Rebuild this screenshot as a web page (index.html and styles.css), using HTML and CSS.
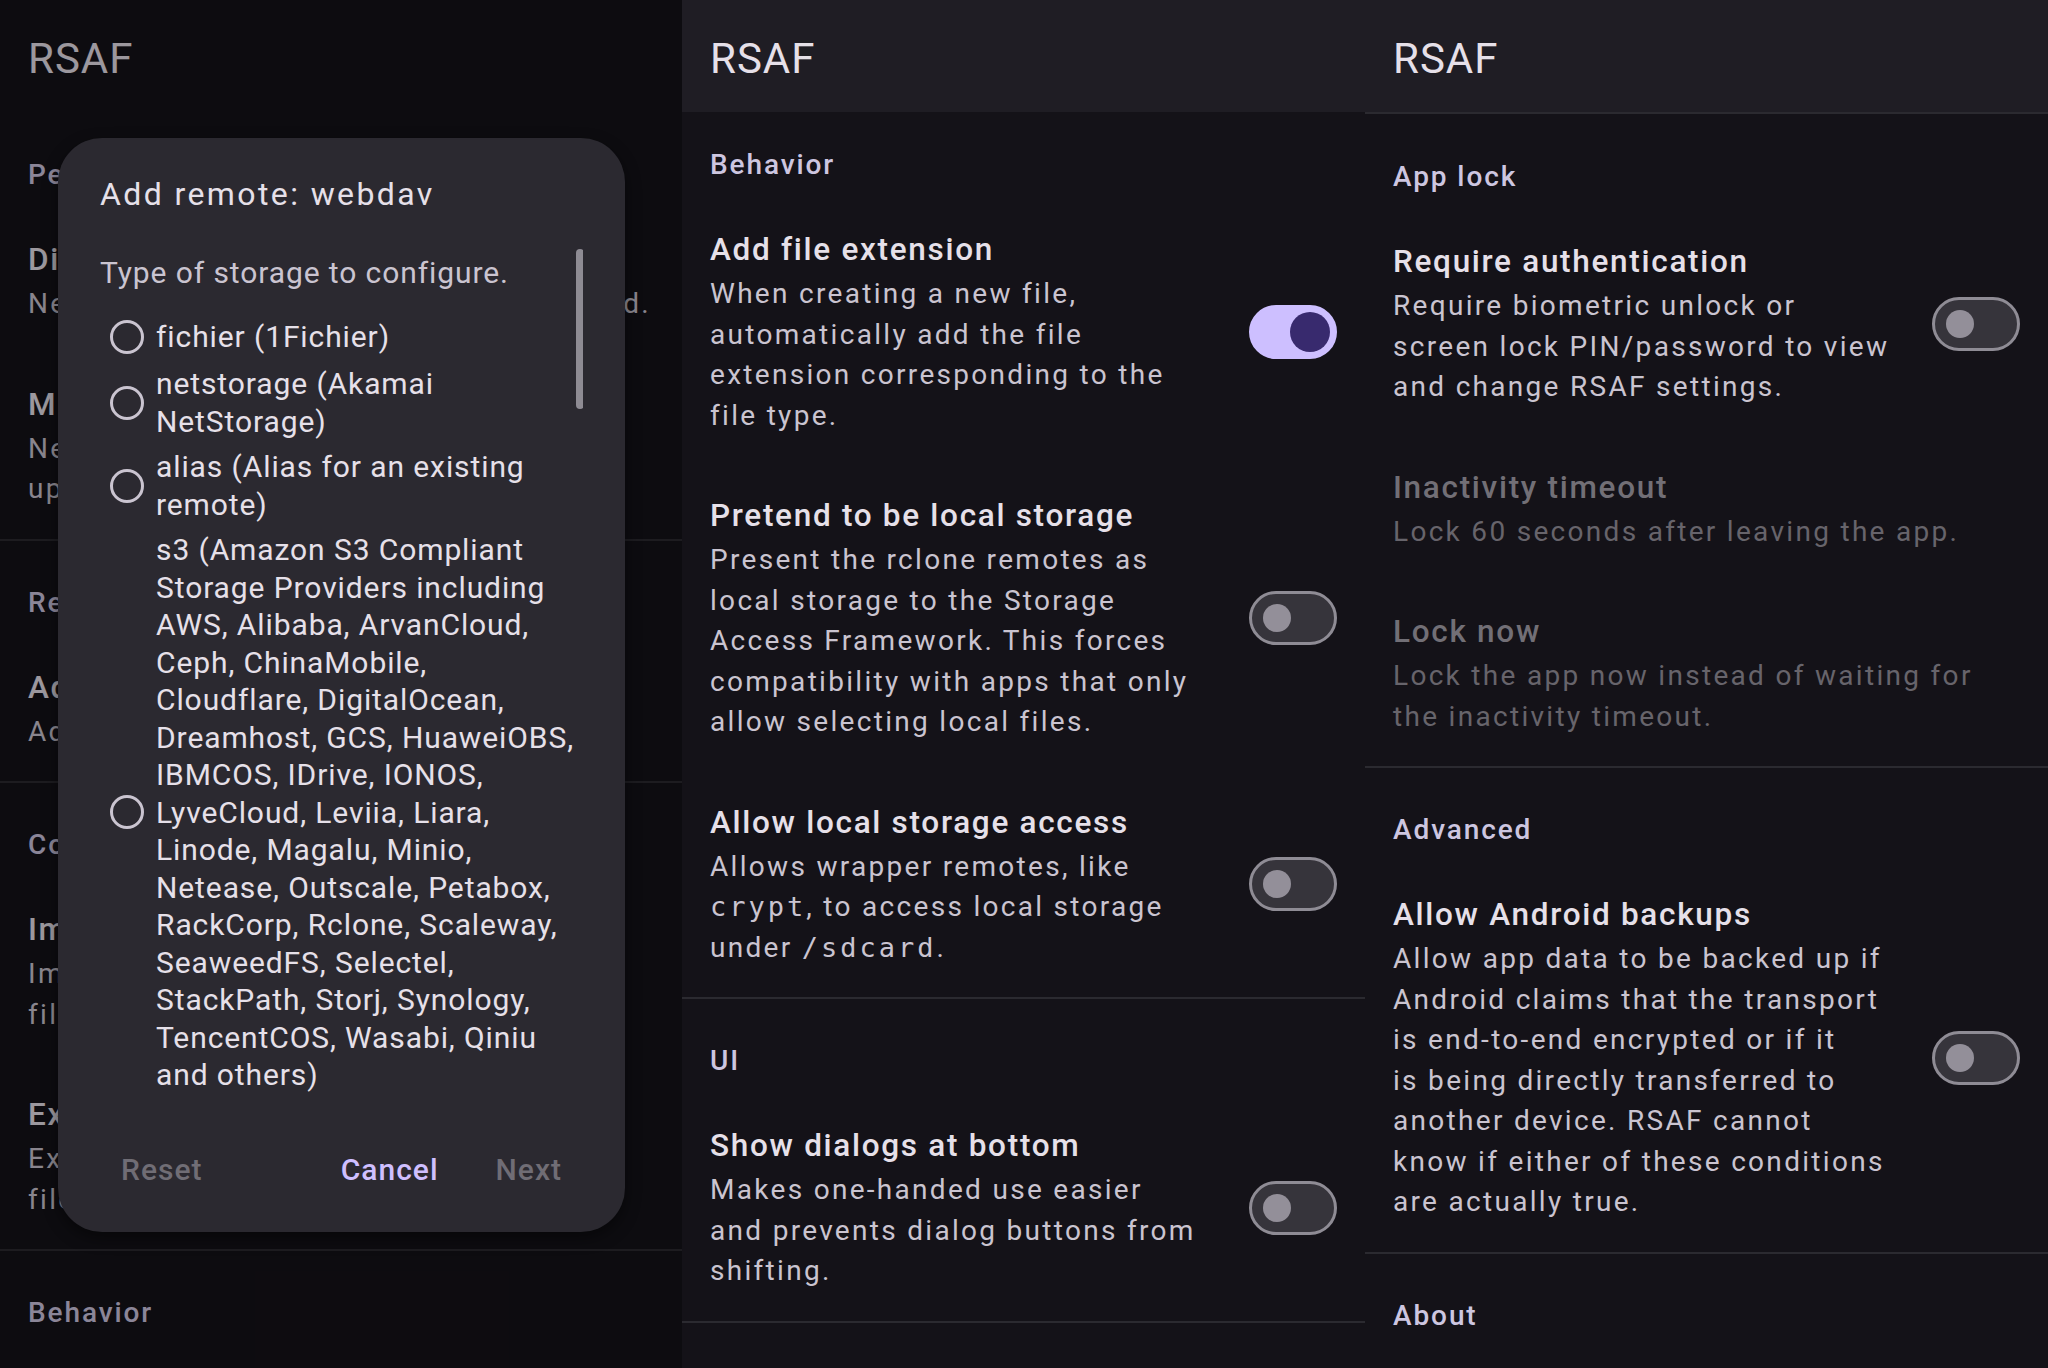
FILE: index.html
```html
<!DOCTYPE html>
<html lang="en">
<head>
  <meta charset="UTF-8">
  <meta name="viewport" content="width=device-width, initial-scale=1.0">
  <title>RSAF - Settings</title>
  <link rel="stylesheet" href="styles.css">
</head>
<body>
  <div class="screens">

    <!-- Main screen with the add remote dialog open -->
    <section class="screen">
      <header class="topbar"><h1>RSAF</h1></header>
      <div class="prefs">
        <div class="group">
          <h2 class="group-title">Permissions</h2>
          <div class="pref">
            <div class="pref-text">
              <div class="pref-title">Disable battery optimization</div>
              <div class="pref-summary nowrap">Needed for transfers to not be interrupted.</div>
            </div>
          </div>
          <div class="pref">
            <div class="pref-text">
              <div class="pref-title">Missing notification permission</div>
              <div class="pref-summary">Needed to show notifications for all uploads.</div>
            </div>
          </div>
        </div>
        <div class="group">
          <h2 class="group-title">Remotes</h2>
          <div class="pref">
            <div class="pref-text">
              <div class="pref-title">Add remote</div>
              <div class="pref-summary">Add a new rclone remote.</div>
            </div>
          </div>
        </div>
        <div class="group">
          <h2 class="group-title">Configuration</h2>
          <div class="pref">
            <div class="pref-text">
              <div class="pref-title">Import configuration</div>
              <div class="pref-summary">Import all remotes from an rclone config file.</div>
            </div>
          </div>
          <div class="pref">
            <div class="pref-text">
              <div class="pref-title">Export configuration</div>
              <div class="pref-summary">Export all remotes into an rclone config file.</div>
            </div>
          </div>
        </div>
        <div class="group">
          <h2 class="group-title">Behavior</h2>
        </div>
      </div>

      <div class="scrim"></div>

      <div class="dialog">
        <h3 class="dialog-title">Add remote: webdav</h3>
        <div class="dialog-body">
          <p class="dialog-message">Type of storage to configure.</p>
          <ul class="radio-list">
            <li class="radio-item"><span class="radio"></span><span class="radio-label">fichier (1Fichier)</span></li>
            <li class="radio-item"><span class="radio"></span><span class="radio-label">netstorage (Akamai NetStorage)</span></li>
            <li class="radio-item"><span class="radio"></span><span class="radio-label">alias (Alias for an existing remote)</span></li>
            <li class="radio-item"><span class="radio"></span><span class="radio-label">s3 (Amazon S3 Compliant Storage Providers including AWS, Alibaba, ArvanCloud, Ceph, ChinaMobile, Cloudflare, DigitalOcean, Dreamhost, GCS, HuaweiOBS, IBMCOS, IDrive, IONOS, LyveCloud, Leviia, Liara, Linode, Magalu, Minio, Netease, Outscale, Petabox, RackCorp, Rclone, Scaleway, SeaweedFS, Selectel, StackPath, Storj, Synology, TencentCOS, Wasabi, Qiniu and others)</span></li>
          </ul>
          <div class="scroll-thumb"></div>
        </div>
        <div class="dialog-actions">
          <button class="text-button" disabled>Reset</button>
          <button class="text-button primary push">Cancel</button>
          <button class="text-button" disabled>Next</button>
        </div>
      </div>
    </section>

    <!-- Behavior / UI settings -->
    <section class="screen">
      <header class="topbar raised"><h1>RSAF</h1></header>
      <div class="prefs scrolled">
        <div class="group">
          <h2 class="group-title">Behavior</h2>
          <div class="pref">
            <div class="pref-text">
              <div class="pref-title">Add file extension</div>
              <div class="pref-summary">When creating a new file, automatically add the file extension corresponding to the file type.</div>
            </div>
            <span class="switch on"><span class="thumb"></span></span>
          </div>
          <div class="pref">
            <div class="pref-text">
              <div class="pref-title">Pretend to be local storage</div>
              <div class="pref-summary">Present the rclone remotes as local storage to the Storage Access Framework. This forces compatibility with apps that only allow selecting local files.</div>
            </div>
            <span class="switch"><span class="thumb"></span></span>
          </div>
          <div class="pref">
            <div class="pref-text">
              <div class="pref-title">Allow local storage access</div>
              <div class="pref-summary">Allows wrapper remotes, like <code>crypt</code>, to access local storage under <code>/sdcard</code>.</div>
            </div>
            <span class="switch"><span class="thumb"></span></span>
          </div>
        </div>
        <div class="group ruled">
          <h2 class="group-title">UI</h2>
          <div class="pref">
            <div class="pref-text">
              <div class="pref-title">Show dialogs at bottom</div>
              <div class="pref-summary">Makes one-handed use easier<br>and prevents dialog buttons from shifting.</div>
            </div>
            <span class="switch"><span class="thumb"></span></span>
          </div>
        </div>
      </div>
    </section>

    <!-- App lock / Advanced settings -->
    <section class="screen">
      <header class="topbar raised edge"><h1>RSAF</h1></header>
      <div class="prefs">
        <div class="group">
          <h2 class="group-title">App lock</h2>
          <div class="pref">
            <div class="pref-text">
              <div class="pref-title">Require authentication</div>
              <div class="pref-summary">Require biometric unlock or screen lock PIN/password to view and change RSAF settings.</div>
            </div>
            <span class="switch"><span class="thumb"></span></span>
          </div>
          <div class="pref disabled">
            <div class="pref-text">
              <div class="pref-title">Inactivity timeout</div>
              <div class="pref-summary">Lock 60 seconds after leaving the app.</div>
            </div>
          </div>
          <div class="pref disabled">
            <div class="pref-text">
              <div class="pref-title">Lock now</div>
              <div class="pref-summary">Lock the app now instead of waiting for the inactivity timeout.</div>
            </div>
          </div>
        </div>
        <div class="group">
          <h2 class="group-title">Advanced</h2>
          <div class="pref">
            <div class="pref-text">
              <div class="pref-title">Allow Android backups</div>
              <div class="pref-summary">Allow app data to be backed up if Android claims that the transport is end-to-end encrypted or if it<br>is being directly transferred to another device. RSAF cannot know if either of these conditions are actually true.</div>
            </div>
            <span class="switch"><span class="thumb"></span></span>
          </div>
        </div>
        <div class="group">
          <h2 class="group-title">About</h2>
        </div>
      </div>
    </section>

  </div>
</body>
</html>
```

FILE: styles.css
```css
/* Reset */
* {
  margin: 0;
  padding: 0;
  box-sizing: border-box;
}

body {
  width: 2048px;
  height: 1368px;
  overflow: hidden;
  background-color: #141218;
  color: #e6e0e9;
  font-family: Roboto, "Noto Sans", sans-serif;
}

/* Three phone screens side by side */
.screens {
  display: grid;
  grid-template-columns: 682px 683px 683px;
  height: 1368px;
}

.screen {
  position: relative;
  overflow: hidden;
  background-color: #141218;
}

/* Top app bar */
.topbar {
  position: relative;
  z-index: 1;
  height: 112px;
  padding: 34px 28px 0;
  background-color: #141218;
}

.topbar h1 {
  font-size: 42px;
  font-weight: 400;
  line-height: 50px;
  letter-spacing: 1px;
  color: #e6e0e9;
}

.topbar.raised {
  background-color: #1f1d24;
}

.topbar.edge {
  height: 114px;
  border-bottom: 2px solid #2b2a30;
}

.prefs.scrolled {
  margin-top: -10px;
}

/* Preference groups */
.group {
  padding-top: 43px;
}

.group + .group {
  padding-top: 42px;
  border-top: 2px solid #2b2a30;
}

.group.ruled {
  border-bottom: 2px solid #2b2a30;
}

.group-title {
  padding: 0 28px;
  margin-bottom: 14px;
  font-size: 28px;
  font-weight: 500;
  line-height: 40px;
  letter-spacing: 1.9px;
  color: #cdc6e0;
}

.pref {
  display: flex;
  align-items: center;
  padding: 29px 28px;
}

.pref-text {
  flex: 1;
  min-width: 0;
}

.pref-title {
  margin-bottom: 2px;
  font-size: 31.5px;
  font-weight: 500;
  line-height: 44px;
  letter-spacing: 1.7px;
  color: #e6e0e9;
}

.pref-summary {
  font-size: 28px;
  line-height: 40.5px;
  letter-spacing: 2.3px;
  color: #cac4d0;
}

.pref-summary.nowrap {
  white-space: nowrap;
}

.pref-summary code {
  font-family: "DejaVu Sans Mono", monospace;
  font-size: 27px;
  letter-spacing: 3px;
}

.pref.disabled .pref-title {
  color: #726f76;
}

.pref.disabled .pref-summary {
  color: #67646b;
}

/* Switch */
.switch {
  flex-shrink: 0;
  display: flex;
  align-items: center;
  width: 88px;
  height: 54px;
  margin-left: 37px;
  border: 3px solid #8f8c95;
  border-radius: 27px;
  background-color: #36343b;
}

.switch .thumb {
  width: 28px;
  height: 28px;
  margin-left: 11px;
  border-radius: 50%;
  background-color: #938f99;
}

.switch.on {
  justify-content: flex-end;
  border-color: #cdbfff;
  background-color: #cdbfff;
}

.switch.on .thumb {
  width: 40px;
  height: 40px;
  margin-left: 0;
  margin-right: 4px;
  background-color: #382a6e;
}

/* Dialog over the main screen */
.scrim {
  position: absolute;
  inset: 0;
  z-index: 2;
  background-color: rgba(0, 0, 0, 0.32);
}

.dialog {
  position: absolute;
  left: 58px;
  top: 138px;
  z-index: 3;
  width: 567px;
  padding: 36px 42px 28px;
  border-radius: 44px;
  background-color: #2b2930;
  box-shadow: 0 6px 16px rgba(0, 0, 0, 0.45);
}

.dialog-title {
  margin-bottom: 35px;
  font-size: 32px;
  font-weight: 400;
  line-height: 40px;
  letter-spacing: 2.4px;
  color: #e6e0e9;
}

.dialog-body {
  position: relative;
  height: 851px;
  padding-top: 5px;
  overflow: hidden;
}

.dialog-message,
.radio-label {
  font-size: 30px;
  line-height: 37.5px;
  letter-spacing: 0.9px;
}

.dialog-message {
  color: #cac4d0;
}

.radio-list {
  list-style: none;
  margin-top: 20.5px;
}

.radio-item {
  display: flex;
  align-items: center;
  gap: 12px;
  min-height: 49px;
  padding: 4px 0 4px 10px;
}

.radio {
  flex-shrink: 0;
  width: 34px;
  height: 34px;
  border: 3px solid #cac4d0;
  border-radius: 50%;
}

.radio-label {
  flex: 1;
  color: #e6e0e9;
}

.scroll-thumb {
  position: absolute;
  top: 0;
  right: -1px;
  width: 8px;
  height: 160px;
  border-radius: 4px;
  background-color: #8e8b93;
}

.dialog-actions {
  display: flex;
  gap: 15px;
  margin-top: 36px;
}

.text-button {
  height: 68px;
  padding: 0 21px;
  border: none;
  background: none;
  font-family: inherit;
  font-size: 30px;
  font-weight: 500;
  line-height: 68px;
  letter-spacing: 1px;
  color: #cfbfff;
}

.text-button:disabled {
  color: #706d75;
}

.text-button.push {
  margin-left: auto;
}
```
